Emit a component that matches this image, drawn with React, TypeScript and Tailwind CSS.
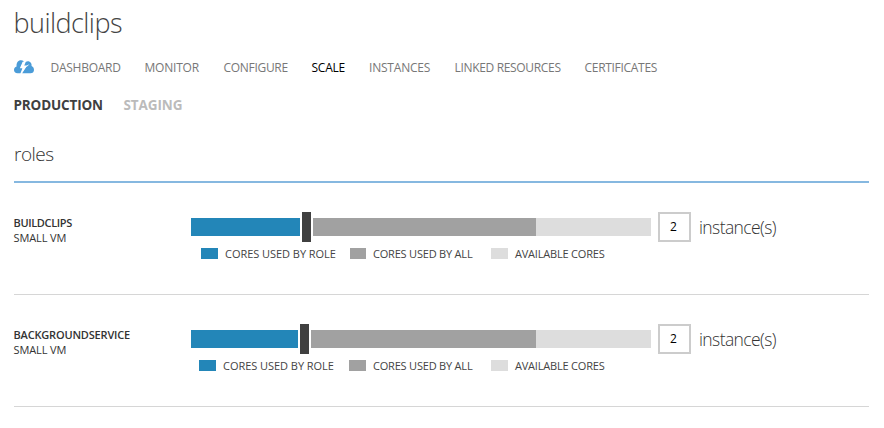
type Tab = { label: string; width: string; active?: boolean };

const tabs: Tab[] = [
  { label: "DASHBOARD", width: "w-[94px] tracking-[-0.26px]" },
  { label: "MONITOR", width: "w-[79px] tracking-[-0.2px]" },
  { label: "CONFIGURE", width: "w-[88px] tracking-[-0.3px]" },
  { label: "SCALE", width: "w-[57.5px] tracking-[-0.25px]", active: true },
  { label: "INSTANCES", width: "w-[85.5px] tracking-[-0.2px]" },
  { label: "LINKED RESOURCES", width: "w-[130px] tracking-[-0.33px]" },
  { label: "CERTIFICATES", width: "w-[90px] tracking-[-0.3px]" },
];

function CloudIcon() {
  return (
    <svg className="h-[14px] w-5" viewBox="0 0 20 14">
      <path
        fill="#4b9cd8"
        d="M3.500 13.300C1.300 13.300 0 11.900 0 10C0 8.200 1 7 2.600 6.600C2.200 3 4 .3 7 .3C8.200 .3 9 .6 9.800 1.200L6.200 7.700L8.600 7.700L6.500 13.300Z"
      />
      <path
        fill="#4b9cd8"
        d="M8.200 13.300L12.600 6.200L10 6.200L11.700 2.100C12.800 1.200 14 1 15.200 1.500C17 2.200 17.800 3.900 17.600 6.100C19.200 6.900 20 8.200 20 10C20 12 18.600 13.300 16.500 13.300Z"
      />
      <path fill="#ffffff" d="M8.600 1.800L11 1.800L9.600 5.600L13 5.600L7.200 13.800L8.800 8.200L6 8.200ZM12 5.800L15.500 4.300L12.500 7Z" />
    </svg>
  );
}

type RoleProps = {
  name: string;
  nameTracking: string;
  usedWidth: string;
  legendOffset: string;
  firstLegend: string;
  secondSwatch: string;
};

function Role({ name, nameTracking, usedWidth, legendOffset, firstLegend, secondSwatch }: RoleProps) {
  return (
    <section className="flex h-[112px] w-[855px] border-b border-[#d6d6d6] pt-[29px]">
      <div className="-ml-[0.5px] w-[177.5px] pt-[3px] text-[11px] leading-[15px] whitespace-nowrap text-[#333]">
        <div className={`font-semibold ${nameTracking}`}>{name}</div>
        <div className="tracking-[-0.12px]">SMALL VM</div>
      </div>
      <div className="w-[460px]">
        <div className="flex h-[30px] items-center">
          <div className={`h-[18px] bg-[#2386b8] ${usedWidth}`} />
          <div className="mx-0.5 h-[30px] w-[9px] bg-[#404040]" />
          <div className="h-[18px] flex-1 bg-[#a1a1a1]" />
          <div className="h-[18px] w-[115px] bg-[#ddd]" />
        </div>
        <div className={`flex pt-[6px] text-[11px] leading-[11px] whitespace-nowrap text-[#444] ${legendOffset}`}>
          <div className="h-[11px] w-[17px] bg-[#2386b8]" />
          <span className={`pl-[7px] tracking-[-0.04px] ${firstLegend}`}>CORES USED BY ROLE</span>
          <div className={`h-[11px] bg-[#a1a1a1] ${secondSwatch}`} />
          <span className="w-[125px] pl-[7px] tracking-[-0.2px]">CORES USED BY ALL</span>
          <div className="h-[11px] w-[17px] bg-[#ddd]" />
          <span className="pl-[7px] tracking-[-0.2px]">AVAILABLE CORES</span>
        </div>
      </div>
      <div className="ml-[7px] flex h-[30px] w-[33px] items-center justify-center border-2 border-[#ccc] pr-0.5 text-[12px] text-black">
        2
      </div>
      <div className="ml-2 h-[30px] text-[17.500px] leading-[31px] font-light tracking-[-0.6px] text-[#333]">instance(s)</div>
    </section>
  );
}

export default function App() {
  return (
    <main className="h-[428px] w-[884px] overflow-hidden bg-white pl-[14px] font-['Open_Sans',sans-serif]">
      <h1 className="-ml-[0.5px] h-[54px] pt-[3px] text-[27px] leading-[40px] font-light tracking-[-0.55px] text-[#444]">
        buildclips
      </h1>
      <nav className="flex h-[28px] items-center text-[12px] whitespace-nowrap">
        <div className="w-[36.5px] pb-0.5">
          <CloudIcon />
        </div>
        {tabs.map((t) => (
          <span key={t.label} className={`${t.width} ${t.active ? "text-black" : "text-[#777]"}`}>
            {t.label}
          </span>
        ))}
      </nav>
      <div className="-ml-[0.5px] flex h-[46px] items-center pt-px text-[13.500px] font-bold whitespace-nowrap">
        <span className="w-[110px] tracking-[-0.15px] text-[#404040]">PRODUCTION</span>
        <span className="tracking-[-0.1px] text-[#bbb]">STAGING</span>
      </div>
      <h2 className="h-[55px] w-[855px] border-b-2 border-[#86b8e0] pt-[12px] text-[19px] leading-[28px] font-light tracking-[-0.5px] text-[#333]">
        roles
      </h2>
      <Role
        name="BUILDCLIPS"
        nameTracking="tracking-[-0.35px]"
        usedWidth="w-[109px]"
        legendOffset="pl-[10px]"
        firstLegend="w-[132px]"
        secondSwatch="w-[16px]"
      />
      <Role
        name="BACKGROUNDSERVICE"
        nameTracking="tracking-[-0.18px]"
        usedWidth="w-[107px]"
        legendOffset="pl-[8px]"
        firstLegend="w-[133px]"
        secondSwatch="w-[17px]"
      />
    </main>
  );
}
